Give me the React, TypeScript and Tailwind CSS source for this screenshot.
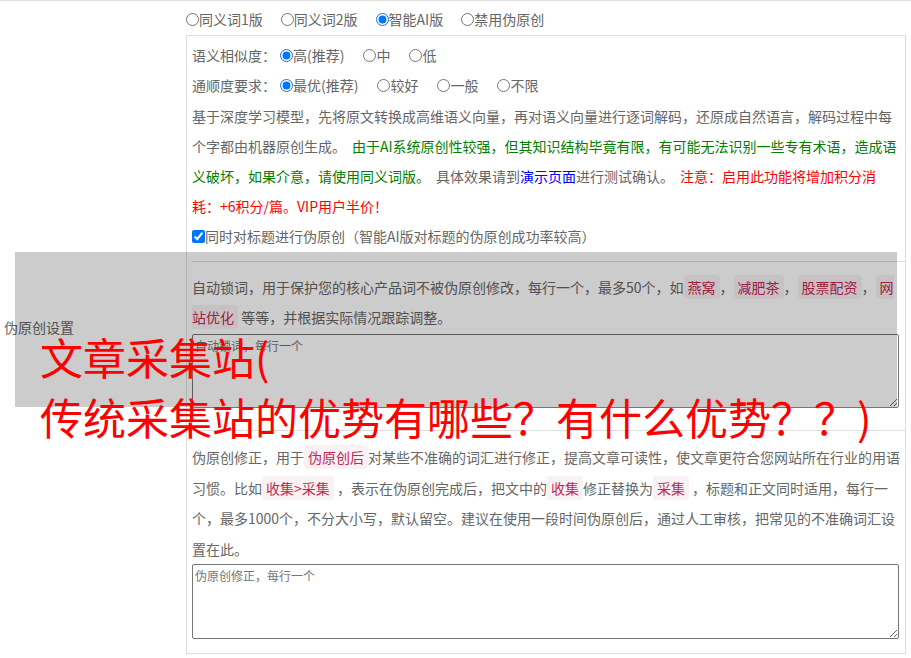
import React from 'react';

const Radio: React.FC<{ name: string; label: string; checked?: boolean; gap?: string }> = ({
  name,
  label,
  checked,
  gap = 'mr-[19px]',
}) => (
  <label className={`inline-flex items-center ${gap}`}>
    <input type="radio" name={name} defaultChecked={checked} className="m-0 h-[13px] w-[13px]" />
    <span>{label}</span>
  </label>
);

const Code: React.FC<{ children: React.ReactNode }> = ({ children }) => (
  <code className="rounded-[4px] bg-[#f9f2f4] px-[4px] py-[2px] font-['Noto_Sans_CJK_SC',sans-serif] text-[#c7254e]">
    {children}
  </code>
);

// wider gap than the font's own space, as in the original page
const Gap = () => <span className="inline-block w-[6px]" />;

export default function App() {
  return (
    <div className="relative min-h-[658px] w-[911px] overflow-hidden border-t border-[#e0e0e0] bg-white font-['Noto_Sans_CJK_SC',sans-serif] text-[14px] text-[#666]">
      <div className="flex items-center">
        {/* label column */}
        <div className="w-[186px] shrink-0 pl-[4px]">伪原创设置</div>

        {/* settings column */}
        <div className="flex-1 pr-[5px]">
          <div className="flex h-[34px] items-center pt-[2px]">
            <Radio name="mode" label="同义词1版" gap="mr-[18px]" />
            <Radio name="mode" label="同义词2版" gap="mr-[18px]" />
            <Radio name="mode" label="智能AI版" checked gap="mr-[18px]" />
            <Radio name="mode" label="禁用伪原创" gap="mr-[18px]" />
          </div>

          <div className="border border-[#ddd] pb-[14px] pl-[5px] pr-[4px] pt-[4px]">
            <div className="flex h-[30px] items-center">
              <span className="mr-[4px]">语义相似度：</span>
              <Radio name="sim" label="高(推荐)" checked />
              <Radio name="sim" label="中" />
              <Radio name="sim" label="低" />
            </div>
            <div className="flex h-[31px] items-center">
              <span className="mr-[4px]">通顺度要求：</span>
              <Radio name="flu" label="最优(推荐)" checked />
              <Radio name="flu" label="较好" />
              <Radio name="flu" label="一般" />
              <Radio name="flu" label="不限" />
            </div>

            <p className="leading-[30px]">
              基于深度学习模型，先将原文转换成高维语义向量，再对语义向量进行逐词解码，还原成自然语言，解码过程中每个字都由机器原创生成。
              <Gap />
              <span className="text-[#008000]">
                由于AI系统原创性较强，但其知识结构毕竟有限，有可能无法识别一些专有术语，造成语义破坏，如果介意，请使用同义词版。
              </span>
              <Gap />
              具体效果请到<span className="text-[#0000ff]">演示页面</span>进行测试确认。
              <Gap />
              <span className="text-[#ff0000]">注意：启用此功能将增加积分消耗：+6积分/篇。VIP用户半价！</span>
            </p>

            <label className="flex h-[30px] items-center">
              <input type="checkbox" defaultChecked className="m-0 h-[13px] w-[13px]" />
              <span>同时对标题进行伪原创（智能AI版对标题的伪原创成功率较高）</span>
            </label>

            <div className="-mr-[4px] mt-[10px] border-t border-[#ddd]" />

            <p className="mt-[10px] leading-[30px]">
              自动锁词，用于保护您的核心产品词不被伪原创修改，每行一个，最多50个，如<Code>燕窝</Code>，<Code>减肥茶</Code>，<Code>股票配资</Code>，<Code>网站优化</Code> 等等，并根据实际情况跟踪调整。
            </p>
            <textarea
              placeholder="自动锁词，每行一个"
              className="mr-[2px] mt-[2px] block h-[74px] w-[calc(100%-2px)] rounded-[2px] border border-[#767676] px-[2px] py-[2px] font-['Noto_Sans_CJK_SC',sans-serif] text-[12px] leading-[18px] placeholder:text-[#757575]"
            />

            <div className="-mr-[4px] mt-[22px] border-t border-[#ddd]" />

            <p className="mt-[11px] leading-[30.5px]">
              伪原创修正，用于<Code>伪原创后</Code>对某些不准确的词汇进行修正，提高文章可读性，使文章更符合您网站所在行业的用语习惯。比如<Code>收集&gt;采集</Code> ，表示在伪原创完成后，把文中的<Code>收集</Code>修正替换为<Code>采集</Code> ，标题和正文同时适用，每行一个，最多1000个，不分大小写，默认留空。建议在使用一段时间伪原创后，通过人工审核，把常见的不准确词汇设置在此。
            </p>
            <textarea
              placeholder="伪原创修正，每行一个"
              className="block h-[75px] w-[calc(100%-2px)] rounded-[2px] border border-[#767676] px-[2px] py-[2px] font-['Noto_Sans_CJK_SC',sans-serif] text-[12px] leading-[18px] placeholder:text-[#757575]"
            />
          </div>
        </div>
      </div>

      {/* caption overlay */}
      <div className="pointer-events-none absolute left-[15px] top-[251px] h-[155px] w-[882px] bg-black/20" />
      <div className="pointer-events-none absolute left-[40px] top-[325px] font-['Noto_Sans_CJK_SC',sans-serif] text-[43px] leading-[60px] text-[#ff0000]">
        <div>文章采集站(</div>
        <div>传统采集站的优势有哪些？有什么优势？？)</div>
      </div>
    </div>
  );
}
